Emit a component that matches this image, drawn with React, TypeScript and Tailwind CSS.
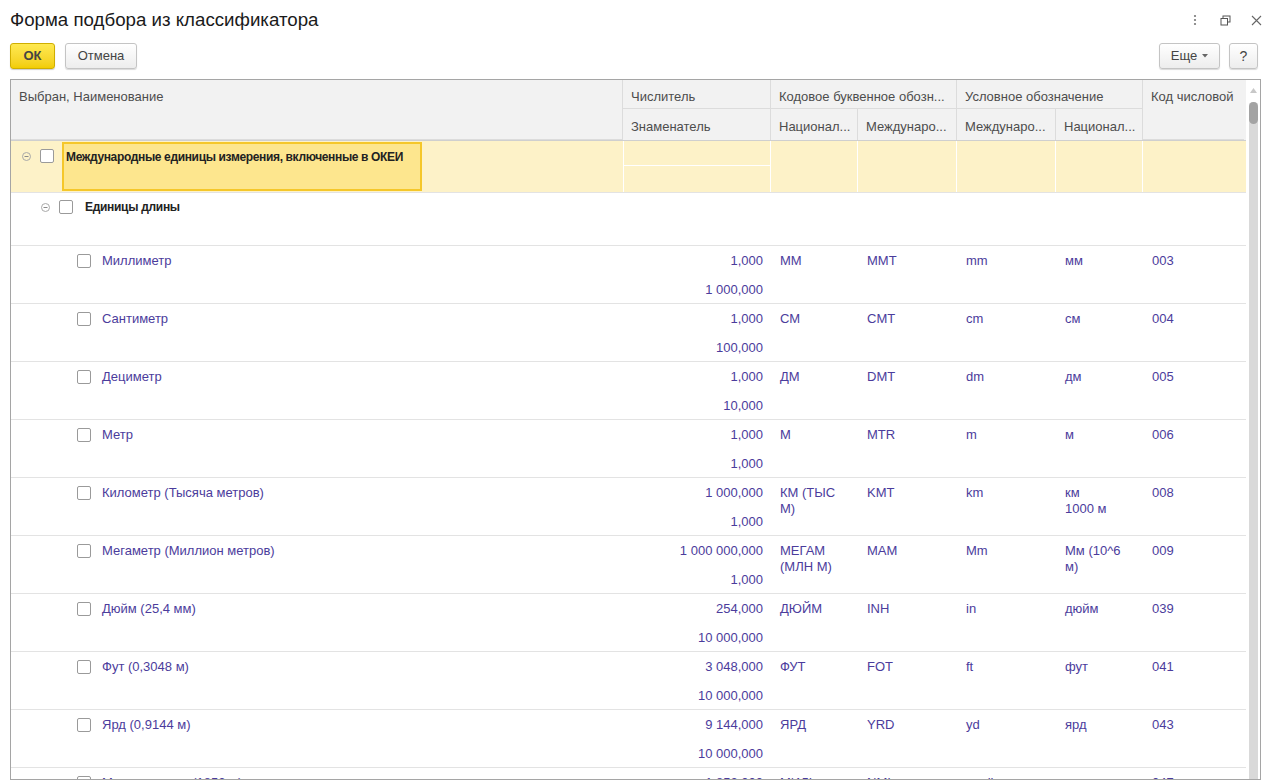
import React from "react";

// ─── Data ─────────────────────────────────────────────────────────────────────

type Unit = {
  name: string;
  num: string;
  den: string;
  codeNat: string;
  codeInt: string;
  symInt: string;
  symNat: string;
  code: string;
};

const units: Unit[] = [
  { name: "Миллиметр", num: "1,000", den: "1 000,000", codeNat: "ММ", codeInt: "MMT", symInt: "mm", symNat: "мм", code: "003" },
  { name: "Сантиметр", num: "1,000", den: "100,000", codeNat: "СМ", codeInt: "CMT", symInt: "cm", symNat: "см", code: "004" },
  { name: "Дециметр", num: "1,000", den: "10,000", codeNat: "ДМ", codeInt: "DMT", symInt: "dm", symNat: "дм", code: "005" },
  { name: "Метр", num: "1,000", den: "1,000", codeNat: "М", codeInt: "MTR", symInt: "m", symNat: "м", code: "006" },
  { name: "Километр (Тысяча метров)", num: "1 000,000", den: "1,000", codeNat: "КМ (ТЫС\nМ)", codeInt: "KMT", symInt: "km", symNat: "км\n1000 м", code: "008" },
  { name: "Мегаметр (Миллион метров)", num: "1 000 000,000", den: "1,000", codeNat: "МЕГАМ\n(МЛН М)", codeInt: "MAM", symInt: "Mm", symNat: "Мм (10^6\nм)", code: "009" },
  { name: "Дюйм (25,4 мм)", num: "254,000", den: "10 000,000", codeNat: "ДЮЙМ", codeInt: "INH", symInt: "in", symNat: "дюйм", code: "039" },
  { name: "Фут (0,3048 м)", num: "3 048,000", den: "10 000,000", codeNat: "ФУТ", codeInt: "FOT", symInt: "ft", symNat: "фут", code: "041" },
  { name: "Ярд (0,9144 м)", num: "9 144,000", den: "10 000,000", codeNat: "ЯРД", codeInt: "YRD", symInt: "yd", symNat: "ярд", code: "043" },
  { name: "Морская миля (1852 м)", num: "1 852,000", den: "1,000", codeNat: "МИЛЬ", codeInt: "NMI", symInt: "n mile", symNat: "миля", code: "047" },
];

const cols =
  "grid grid-cols-[612px_148px_87px_99px_99px_87px_101px]";

// ─── Small parts ──────────────────────────────────────────────────────────────

const Checkbox = () => (
  <span className="block h-[14px] w-[14px] shrink-0 rounded-[2px] border border-[#9a9a9a] bg-white" />
);

const Collapse = () => (
  <svg width="9" height="9" viewBox="0 0 9 9" className="shrink-0">
    <circle cx="4.5" cy="4.5" r="4" fill="none" stroke="#a8a8a8" />
    <path d="M2.5 4.5h4" stroke="#8a8a8a" />
  </svg>
);

const HeadCell = ({
  children,
  className = "",
}: {
  children?: React.ReactNode;
  className?: string;
}) => (
  <div
    className={`overflow-hidden whitespace-nowrap border-r border-b border-[#dcdcdc] px-[8px] pt-[7px] ${className}`}
  >
    {children}
  </div>
);

// ─── Rows ─────────────────────────────────────────────────────────────────────

const UnitRow = ({ u }: { u: Unit }) => (
  <div className={`${cols} h-[58px] border-b border-[#e3e3e3] leading-[16px] text-[#4b3c9c]`}>
    <div className="flex items-start gap-[11px] pt-[8px] pl-[66px]">
      <Checkbox />
      <span className="leading-[14px]">{u.name}</span>
    </div>
    <div className="flex flex-col items-end pr-[8px]">
      <div className="h-[29px] pt-[7px]">{u.num}</div>
      <div className="h-[29px] pt-[7px]">{u.den}</div>
    </div>
    <div className="whitespace-pre-line pt-[7px] pl-[9px]">{u.codeNat}</div>
    <div className="pt-[7px] pl-[9px]">{u.codeInt}</div>
    <div className="pt-[7px] pl-[9px]">{u.symInt}</div>
    <div className="whitespace-pre-line pt-[7px] pl-[9px]">{u.symNat}</div>
    <div className="pt-[7px] pl-[9px]">{u.code}</div>
  </div>
);

// ─── Component ────────────────────────────────────────────────────────────────

export default function App() {
  return (
    <div
      className="flex h-[780px] w-[1271px] flex-col overflow-hidden bg-white text-[13px] text-[#333]"
      style={{ fontFamily: '"Liberation Sans", Arial, sans-serif' }}
    >
      {/* ── Title ── */}
      <div className="flex h-[40px] items-center justify-between pl-[10px] pr-[9px]">
        <h1 className="pt-[1px] text-[18.7px] text-[#1a1a1a]">
          Форма подбора из классификатора
        </h1>
        <div className="flex items-center gap-[20px] text-[#666]">
          <svg width="10" height="12" viewBox="0 0 10 12">
            <circle cx="5" cy="2" r="1.1" fill="#777" />
            <circle cx="5" cy="6" r="1.1" fill="#777" />
            <circle cx="5" cy="10" r="1.1" fill="#777" />
          </svg>
          <svg width="11" height="11" viewBox="0 0 11 11">
            <rect x="3" y="1" width="7" height="6" fill="none" stroke="#555" />
            <rect x="1" y="3.5" width="6.5" height="6.5" fill="#fff" stroke="#555" />
          </svg>
          <svg width="11" height="11" viewBox="0 0 11 11">
            <path d="M1 1l9 9M10 1l-9 9" stroke="#666" strokeWidth="1.1" />
          </svg>
        </div>
      </div>

      {/* ── Toolbar ── */}
      <div className="flex h-[39px] items-start justify-between px-[10px] pt-[3px]">
        <div className="flex gap-[10px]">
          <button className="h-[26px] w-[45px] rounded-[3px] border border-[#cfae00] bg-gradient-to-b from-[#ffe94f] to-[#f2cd00] text-[13px] font-bold text-[#444] shadow-[0_1px_1px_rgba(0,0,0,0.2)]">
            ОК
          </button>
          <button className="h-[26px] w-[72px] rounded-[3px] border border-[#c4c4c4] bg-gradient-to-b from-white to-[#ededed] text-[13px] text-[#444] shadow-[0_1px_1px_rgba(0,0,0,0.15)]">
            Отмена
          </button>
        </div>
        <div className="flex gap-[9px] pr-[3px]">
          <button className="flex h-[26px] w-[61px] items-center justify-center gap-[5px] rounded-[3px] border border-[#c4c4c4] bg-gradient-to-b from-white to-[#ededed] text-[13px] text-[#444] shadow-[0_1px_1px_rgba(0,0,0,0.15)]">
            Еще
            <svg width="6" height="4" viewBox="0 0 6 4">
              <path d="M0 0h6L3 3.5z" fill="#666" />
            </svg>
          </button>
          <button className="h-[26px] w-[29px] rounded-[3px] border border-[#c4c4c4] bg-gradient-to-b from-white to-[#ededed] text-[14px] text-[#444] shadow-[0_1px_1px_rgba(0,0,0,0.15)]">
            ?
          </button>
        </div>
      </div>

      {/* ── Table ── */}
      <div className="mx-[10px] flex min-h-0 flex-1 border border-[#a5a5a5]">
        <div className="min-w-0 flex-1 overflow-hidden">
          {/* header */}
          <div
            className={`${cols} grid-rows-[29px_31px] border-b border-[#cfcfcf] bg-[#f2f2f2] text-[#4d4d4d]`}
          >
            <HeadCell className="row-span-2">Выбран, Наименование</HeadCell>
            <HeadCell>Числитель</HeadCell>
            <HeadCell className="col-span-2">Кодовое буквенное обозн...</HeadCell>
            <HeadCell className="col-span-2">Условное обозначение</HeadCell>
            <HeadCell className="row-span-2 border-r-0">Код числовой</HeadCell>
            <HeadCell className="border-b-0 pt-[8px]">Знаменатель</HeadCell>
            <HeadCell className="border-b-0 pt-[8px]">Национал...</HeadCell>
            <HeadCell className="border-b-0 pt-[8px]">Междунаро...</HeadCell>
            <HeadCell className="border-b-0 pt-[8px]">Междунаро...</HeadCell>
            <HeadCell className="border-b-0 pt-[8px]">Национал...</HeadCell>
          </div>

          {/* group: OKEI */}
          <div className={`${cols} h-[52px] border-b border-[#e3e3e3] bg-[#fdf2c8]`}>
            <div className="flex items-start pl-[11px] pt-[1px]">
              <div className="flex items-center gap-[9px] pt-[7px]">
                <Collapse />
                <Checkbox />
              </div>
              <div className="ml-[8px] h-[49px] w-[360px] overflow-hidden whitespace-nowrap border-2 border-[#f5c72a] bg-[#fde68e] pl-[2px] pt-[4px] text-[12px] font-bold tracking-[-0.35px] text-[#222]">
                Международные единицы измерения, включенные в ОКЕИ
              </div>
            </div>
            <div className="flex flex-col border-x border-white">
              <div className="h-[25px] border-b border-white" />
            </div>
            <div className="border-r border-white" />
            <div className="border-r border-white" />
            <div className="border-r border-white" />
            <div className="border-r border-white" />
            <div />
          </div>

          {/* group: length */}
          <div className={`${cols} h-[53px] border-b border-[#e3e3e3]`}>
            <div className="flex items-start gap-[9px] pl-[30px] pt-[7px]">
              <div className="flex items-center gap-[9px]">
                <Collapse />
                <Checkbox />
              </div>
              <span className="pl-[3px] text-[12px] font-bold leading-[14px] tracking-[-0.3px] text-[#222]">
                Единицы длины
              </span>
            </div>
          </div>

          {units.map((u) => (
            <UnitRow key={u.code} u={u} />
          ))}
        </div>

        {/* scrollbar */}
        <div className="flex w-[14px] shrink-0 flex-col items-center bg-white">
          <svg width="7" height="5" viewBox="0 0 7 5" className="mt-[8px]">
            <path d="M0 5L3.5 0 7 5z" fill="#c8c8c8" />
          </svg>
          <div className="mt-[9px] w-[9px] flex-1 rounded-t-[4px] bg-[#d9d9d9]">
            <div className="h-[22px] w-[9px] rounded-full bg-[#a3a3a3]" />
          </div>
        </div>
      </div>
    </div>
  );
}
